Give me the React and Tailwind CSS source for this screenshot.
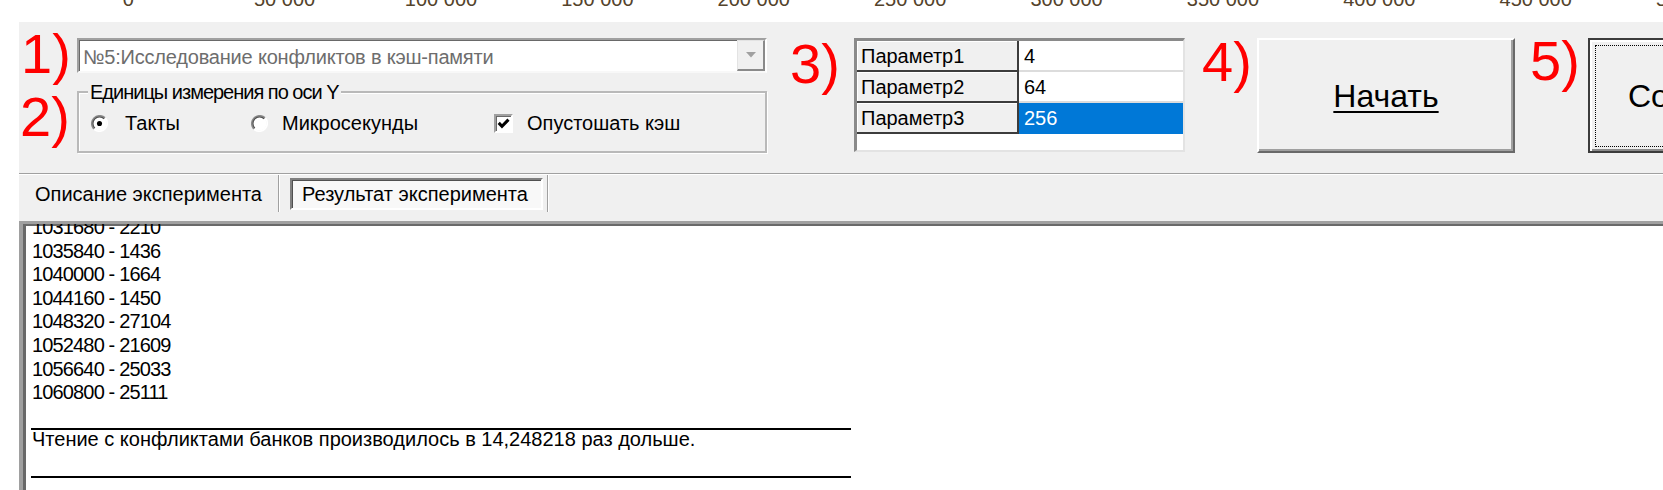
import React from "react";

const ticks = ["0", "50 000", "100 000", "150 000", "200 000", "250 000", "300 000", "350 000", "400 000", "450 000", "500 000"];

const results = [
  "1031680 - 2210",
  "1035840 - 1436",
  "1040000 - 1664",
  "1044160 - 1450",
  "1048320 - 27104",
  "1052480 - 21609",
  "1056640 - 25033",
  "1060800 - 25111",
];

const params = [
  { name: "Параметр1", value: "4" },
  { name: "Параметр2", value: "64" },
  { name: "Параметр3", value: "256", selected: true },
];

function Num({ children, className }) {
  return (
    <span className={`block shrink-0 w-[50px] h-[56px] text-[56px] leading-[56px] text-[#ff0000] ${className}`}>
      {children}
    </span>
  );
}

function Radio({ checked }) {
  return (
    <svg width="17" height="17" viewBox="0 0 16 16" className="shrink-0">
      <circle cx="8" cy="8" r="6.5" fill="#fff" />
      <path d="M2.7 13.3 A7.5 7.5 0 0 1 13.3 2.7" fill="none" stroke="#8a8a8a" strokeWidth="1.5" />
      <path d="M3.6 12.4 A6.2 6.2 0 0 1 12.4 3.6" fill="none" stroke="#505050" strokeWidth="1.2" />
      <path d="M13.3 2.7 A7.5 7.5 0 0 1 2.7 13.3" fill="none" stroke="#fff" strokeWidth="1.5" />
      {checked && <circle cx="8" cy="8" r="2.4" fill="#000" />}
    </svg>
  );
}

function Line({ children, numeric }) {
  return (
    <div className={`h-[23.6px] leading-[23.6px] whitespace-nowrap ${numeric ? "tracking-[-0.85px]" : ""}`}>
      {children}
    </div>
  );
}

function Rule() {
  return (
    <div className="flex items-end h-[23.6px]">
      <div className="w-[820px] h-[2px] bg-black -mb-[2px] -ml-[1px]" />
    </div>
  );
}

export default function App() {
  return (
    <div className="w-[1663px] h-[490px] overflow-hidden bg-white font-['Liberation_Sans',Arial,sans-serif] text-[20px] text-black flex flex-col">
      {/* chart axis, only the bottom of the labels shows */}
      <div className="h-[22px] shrink-0 overflow-hidden flex pl-[50px]">
        {ticks.map((t) => (
          <div key={t} className="w-[156.4px] shrink-0 text-center leading-[20px] -mt-[11px] text-[#54432b] whitespace-nowrap">
            {t}
          </div>
        ))}
      </div>

      {/* control panel */}
      <div className="ml-[19px] bg-[#f0f0f0] shrink-0 flex flex-col">
        <div className="h-[151px] flex items-start">
          {/* 1) and 2) */}
          <div className="w-[748px] shrink-0 flex flex-col">
            <div className="flex mt-[16px] h-[35px]">
              <Num className="ml-[2px] w-[56px] -mt-[12px]">1)</Num>
              <div className="w-[690px] h-[35px] shrink-0 flex bg-white border-2 border-t-[#a0a0a0] border-l-[#a0a0a0] border-r-white border-b-[#f8f8f8] shadow-[inset_1px_1px_0_#696969]">
                <div className="flex-1 flex items-center pl-[4px] pt-[2px] text-[#6d6d6d] tracking-[-0.2px] whitespace-nowrap">
                  №5:Исследование конфликтов в кэш-памяти
                </div>
                <div className="w-[28px] shrink-0 flex items-center justify-center bg-[#f0f0f0] border-l border-t border-l-[#e3e3e3] border-t-[#e3e3e3] border-r-2 border-b-2 border-r-[#8a8a8a] border-b-[#8a8a8a]">
                  <svg width="10" height="6" viewBox="0 0 10 6">
                    <polygon points="0,0 10,0 5,5.5" fill="#a0a0a0" />
                  </svg>
                </div>
              </div>
            </div>
            <div className="flex mt-[18px] h-[62px]">
              <Num className="ml-[1px] w-[57px] -mt-[2px]">2)</Num>
              <div className="w-[690px] h-[62px] shrink-0 flex flex-col border-2 border-[#b9b9b9] shadow-[inset_1px_1px_0_#fff,1px_1px_0_#fff]">
                <span className="self-start ml-[9px] px-[2px] -mt-[11px] leading-[20px] bg-[#f0f0f0] tracking-[-1px] whitespace-nowrap">
                  Единицы измерения по оси Y
                </span>
                <div className="flex items-center h-[20px] mt-[11px]">
                  <div className="w-[172px] pl-[12px] shrink-0 flex items-center">
                    <Radio checked />
                    <span className="ml-[17px]">Такты</span>
                  </div>
                  <div className="w-[243px] shrink-0 flex items-center">
                    <Radio />
                    <span className="ml-[14px]">Микросекунды</span>
                  </div>
                  <div className="flex items-center">
                    <div className="w-[19px] h-[19px] shrink-0 bg-white border-2 border-t-[#a0a0a0] border-l-[#a0a0a0] border-r-white border-b-white shadow-[inset_1px_1px_0_#696969] flex items-center justify-center">
                      <svg width="13" height="13" viewBox="0 0 12 12">
                        <path d="M1.6 5.4 L4.6 8.6 L10.6 2.4" stroke="#000" strokeWidth="2.8" fill="none" />
                      </svg>
                    </div>
                    <span className="ml-[14px] whitespace-nowrap">Опустошать кэш</span>
                  </div>
                </div>
              </div>
            </div>
          </div>

          {/* 3) parameter grid */}
          <Num className="ml-[23px] mt-[14px]">3)</Num>
          <div className="ml-[14px] mt-[16px] w-[331px] h-[114px] shrink-0 flex flex-col bg-white border-t-[3px] border-l-[3px] border-t-[#8a8a8a] border-l-[#8a8a8a] border-r-2 border-b-2 border-r-[#e3e3e3] border-b-[#e3e3e3]">
            {params.map((p) => (
              <div key={p.name} className="flex h-[31px] shrink-0">
                <div className="w-[162px] shrink-0 flex items-center pl-[4px] bg-[#f0f0f0] border-r-2 border-b-2 border-[#3c3c3c] shadow-[inset_1px_1px_0_#fff]">
                  {p.name}
                </div>
                <div
                  className={`flex-1 flex items-center pl-[5px] border-b-2 border-[#dcdcdc] ${
                    p.selected ? "bg-[#0078d7] text-white border-b-[#0078d7]" : ""
                  }`}
                >
                  {p.value}
                </div>
              </div>
            ))}
          </div>

          {/* 4) start */}
          <Num className="ml-[17px] mt-[12px]">4)</Num>
          <div className="ml-[5px] mt-[16px] w-[258px] h-[115px] shrink-0 flex items-center justify-center border-2 border-t-white border-l-white border-r-[#696969] border-b-[#696969] shadow-[inset_-2px_-2px_0_#a0a0a0] text-[32px] leading-none underline decoration-2 underline-offset-[4px]">
            Начать
          </div>

          {/* 5) default button, cut by the window edge */}
          <Num className="ml-[15px] mt-[11px]">5)</Num>
          <div className="ml-[8px] mt-[16px] w-[240px] h-[115px] shrink-0 flex border-2 border-[#3c3c3c] shadow-[inset_2px_2px_0_#fff,inset_-2px_-2px_0_#8a8a8a]">
            <div className="flex-1 m-[5px] mb-[4px] border border-dotted border-black flex items-center pl-[32px] text-[32px] leading-none whitespace-nowrap">
              Сохранить
            </div>
          </div>
        </div>

        {/* tabs */}
        <div className="h-[48px] shrink-0 flex items-start border-t border-[#a0a0a0] shadow-[inset_0_1px_0_#fff]">
          <div className="w-[259px] shrink-0 pl-[16px] mt-[10px] leading-[20px] whitespace-nowrap">Описание эксперимента</div>
          <div className="w-[2px] h-[37px] mt-[1px] shrink-0 border-l border-l-[#a0a0a0] border-r border-r-white" />
          <div className="ml-[10px] mt-[4px] w-[253px] h-[32px] shrink-0 flex items-center pl-[10px] bg-[#f8f8f8] border-2 border-t-[#808080] border-l-[#808080] border-r-white border-b-white shadow-[inset_1px_1px_0_#505050] whitespace-nowrap">
            Результат эксперимента
          </div>
          <div className="ml-[4px] w-[2px] h-[37px] mt-[1px] shrink-0 border-l border-l-[#a0a0a0] border-r border-r-white" />
        </div>
      </div>

      {/* results text box */}
      <div className="ml-[19px] flex-1 min-h-0 overflow-hidden bg-white border-t-[3px] border-l-[4px] border-[#a0a0a0] shadow-[inset_3px_2px_0_#696969] pl-[9px]">
        <div className="-mt-[8px]">
          {results.map((r) => (
            <Line key={r} numeric>
              {r}
            </Line>
          ))}
          <Rule />
          <Line>Чтение с конфликтами банков производилось в 14,248218 раз дольше.</Line>
          <Rule />
          <Line> </Line>
        </div>
      </div>
    </div>
  );
}
